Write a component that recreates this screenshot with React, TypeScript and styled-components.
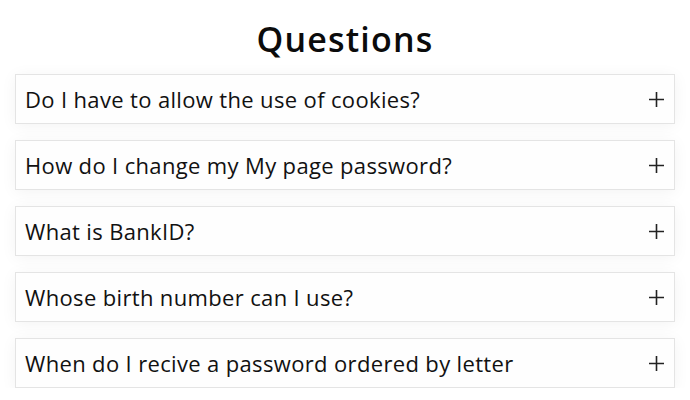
import * as React from "react";
import styled, { createGlobalStyle } from "styled-components";

const GlobalStyle = createGlobalStyle`
  html, body {
    margin: 0;
    padding: 0;
    background: #ffffff;
  }
  body {
    font-family: "Open Sans", "Noto Sans", sans-serif;
    color: #111;
  }
`;

const questions = [
  "Do I have to allow the use of cookies?",
  "How do I change my My page password?",
  "What is BankID?",
  "Whose birth number can I use?",
  "When do I recive a password ordered by letter",
];

const PlusIcon = () => (
  <svg width="15" height="15" viewBox="0 0 15 15">
    <path d="M7.5 0 V15 M0 7.5 H15" stroke="#222" strokeWidth="1.6" />
  </svg>
);

export default function App() {
  return (
    <>
      <GlobalStyle />
      <Wrapper>
        <Title>Questions</Title>
        <List>
          {questions.map((q) => (
            <Item key={q}>
              <Question>{q}</Question>
              <Toggle>
                <PlusIcon />
              </Toggle>
            </Item>
          ))}
        </List>
      </Wrapper>
    </>
  );
}

const Wrapper = styled.div`
  padding: 17px 15px 0 15px;
  display: flex;
  flex-direction: column;
  align-items: stretch;
`;

const Title = styled.h1`
  margin: 0 0 13px 0;
  text-align: center;
  font-size: 34px;
  line-height: 44px;
  font-weight: 600;
  letter-spacing: 1.2px;
  color: #0b0b0b;
`;

const List = styled.div`
  display: flex;
  flex-direction: column;
  gap: 16px;
`;

const Item = styled.div`
  display: flex;
  align-items: center;
  justify-content: space-between;
  height: 50px;
  box-sizing: border-box;
  padding: 0 10px 0 9px;
  border: 1px solid #e4e4e4;
  background: #fefefe;
  box-shadow: 0 2px 16px rgba(0, 0, 0, 0.05);
`;

const Question = styled.span`
  font-size: 22px;
  letter-spacing: 0.35px;
  color: #111;
`;

const Toggle = styled.span`
  display: flex;
  align-items: center;
`;
